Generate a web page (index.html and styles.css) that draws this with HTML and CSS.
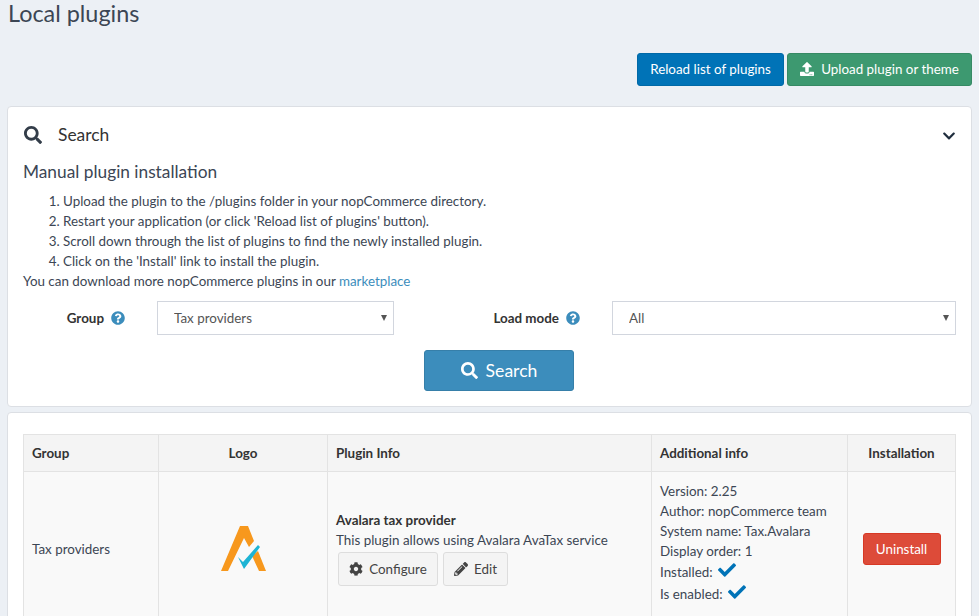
FILE: index.html
```html
<!DOCTYPE html>
<html lang="en">
<head>
    <meta charset="UTF-8">
    <meta name="viewport" content="width=device-width, initial-scale=1.0">
    <title>Local plugins</title>
    <link rel="stylesheet" href="styles.css">
</head>
<body>

    <svg class="icon-defs" width="0" height="0">
        <symbol id="i-search" viewBox="0 0 512 512"><path d="M505 442.7L405.3 343c-4.5-4.5-10.6-7-17-7H372c27.6-35.3 44-79.7 44-128C416 93.1 322.9 0 208 0S0 93.1 0 208s93.1 208 208 208c48.3 0 92.7-16.4 128-44v16.3c0 6.4 2.5 12.5 7 17l99.7 99.7c9.4 9.4 24.6 9.4 33.9 0l28.3-28.3c9.4-9.4 9.4-24.6.1-34zM208 336c-70.7 0-128-57.2-128-128 0-70.7 57.2-128 128-128 70.7 0 128 57.2 128 128 0 70.7-57.2 128-128 128z"/></symbol>
        <symbol id="i-check" viewBox="0 0 512 512"><path d="M173.898 439.404l-166.4-166.4c-9.997-9.997-9.997-26.206 0-36.204l36.203-36.204c9.997-9.998 26.207-9.998 36.204 0L192 312.69 432.095 72.596c9.997-9.997 26.207-9.997 36.204 0l36.203 36.204c9.997 9.997 9.997 26.206 0 36.204l-294.4 294.401c-9.998 9.997-26.207 9.997-36.204-.001z"/></symbol>
        <symbol id="i-help" viewBox="0 0 512 512"><path d="M504 256c0 136.997-111.043 248-248 248S8 392.997 8 256C8 119.083 119.043 8 256 8s248 111.083 248 248zM262.655 90c-54.497 0-89.255 22.957-116.549 63.758-3.536 5.286-2.353 12.415 2.715 16.258l34.699 26.31c5.205 3.947 12.621 3.008 16.665-2.122 17.864-22.658 30.113-35.797 57.303-35.797 20.429 0 45.698 13.148 45.698 32.958 0 14.976-12.363 22.667-32.534 33.976C247.128 238.528 216 254.941 216 296v4c0 6.627 5.373 12 12 12h56c6.627 0 12-5.373 12-12v-1.333c0-28.462 83.186-29.647 83.186-106.667 0-58.002-60.165-102-116.531-102zM256 338c-25.365 0-46 20.635-46 46 0 25.364 20.635 46 46 46s46-20.636 46-46c0-25.365-20.635-46-46-46z"/></symbol>
    </svg>

    <div class="page-head">
        <h1>Local plugins</h1>
        <div class="head-buttons">
            <button class="btn btn-reload" type="button">Reload list of plugins</button>
            <button class="btn btn-upload" type="button">
                <svg class="icon" viewBox="0 0 512 512"><path d="M296 384h-80c-13.3 0-24-10.7-24-24V192h-87.7c-17.8 0-26.7-21.5-14.1-34.1L242.3 5.7c7.5-7.5 19.8-7.5 27.3 0l152.2 152.2c12.6 12.6 3.7 34.1-14.1 34.1H320v168c0 13.3-10.7 24-24 24zm216-8v112c0 13.3-10.7 24-24 24H24c-13.3 0-24-10.7-24-24V376c0-13.3 10.7-24 24-24h136v8c0 30.9 25.1 56 56 56h80c30.9 0 56-25.1 56-56v-8h136c13.3 0 24 10.7 24 24zm-124 88c0-11-9-20-20-20s-20 9-20 20 9 20 20 20 20-9 20-20zm64 0c0-11-9-20-20-20s-20 9-20 20 9 20 20 20 20-9 20-20z"/></svg>
                Upload plugin or theme
            </button>
        </div>
    </div>

    <div class="card search-card">
        <div class="search-head">
            <svg class="icon search-head-icon"><use href="#i-search"/></svg>
            <span class="search-head-text">Search</span>
            <svg class="icon chevron" viewBox="0 0 448 512"><path d="M207.029 381.476L12.686 187.132c-9.373-9.373-9.373-24.569 0-33.941l22.667-22.667c9.357-9.357 24.522-9.375 33.901-.04L224 284.505l154.745-154.021c9.379-9.335 24.544-9.317 33.901.04l22.667 22.667c9.373 9.373 9.373 24.569 0 33.941L240.971 381.476c-9.373 9.372-24.569 9.372-33.942 0z"/></svg>
        </div>

        <h2>Manual plugin installation</h2>
        <ol class="steps">
            <li>Upload the plugin to the /plugins folder in your nopCommerce directory.</li>
            <li>Restart your application (or click 'Reload list of plugins' button).</li>
            <li>Scroll down through the list of plugins to find the newly installed plugin.</li>
            <li>Click on the 'Install' link to install the plugin.</li>
        </ol>
        <p class="more">You can download more nopCommerce plugins in our <a href="#">marketplace</a></p>

        <div class="filters">
            <label class="filter-label">Group <svg class="icon help"><use href="#i-help"/></svg></label>
            <div class="select-wrap">
                <select><option>Tax providers</option></select>
            </div>
            <label class="filter-label">Load mode <svg class="icon help"><use href="#i-help"/></svg></label>
            <div class="select-wrap">
                <select><option>All</option></select>
            </div>
        </div>

        <div class="search-action">
            <button class="btn btn-search" type="button">
                <svg class="icon"><use href="#i-search"/></svg>
                Search
            </button>
        </div>
    </div>

    <div class="card table-card">
        <table>
            <thead>
                <tr>
                    <th class="col-group">Group</th>
                    <th class="col-logo center">Logo</th>
                    <th class="col-info">Plugin Info</th>
                    <th class="col-extra">Additional info</th>
                    <th class="center">Installation</th>
                </tr>
            </thead>
            <tbody>
                <tr>
                    <td>Tax providers</td>
                    <td class="center">
                        <svg class="logo" viewBox="0 0 75 70">
                            <polygon fill="#f7981d" points="16,57 23,57 39,24 44,33 49,27 43,12 35,12"/>
                            <polygon fill="#f7981d" points="47,42 54,57 61,57 53,37"/>
                            <polygon fill="#1db4d4" points="33,43 38,48 53,31 55,33 39,55"/>
                        </svg>
                    </td>
                    <td class="info">
                        <div class="plugin-name">Avalara tax provider</div>
                        <div>This plugin allows using Avalara AvaTax service</div>
                        <div class="plugin-actions">
                            <button class="btn btn-plain btn-configure" type="button">
                                <svg class="icon" viewBox="0 0 512 512"><path d="M487.4 315.7l-42.6-24.6c4.3-23.2 4.3-47 0-70.2l42.6-24.6c4.9-2.8 7.1-8.6 5.5-14-11.1-35.6-30-67.8-54.7-94.6-3.8-4.1-10-5.1-14.8-2.3L380.8 110c-17.9-15.4-38.5-27.3-60.8-35.1V25.8c0-5.6-3.9-10.5-9.4-11.7-36.7-8.2-74.3-7.8-109.2 0-5.5 1.2-9.4 6.1-9.4 11.7V75c-22.2 7.9-42.8 19.8-60.8 35.1L88.7 85.5c-4.9-2.8-11-1.9-14.8 2.3-24.7 26.7-43.6 58.9-54.7 94.6-1.7 5.4.6 11.2 5.5 14L67.3 221c-4.3 23.2-4.3 47 0 70.2l-42.6 24.6c-4.9 2.8-7.1 8.6-5.5 14 11.1 35.6 30 67.8 54.7 94.6 3.8 4.1 10 5.1 14.8 2.3l42.6-24.6c17.9 15.4 38.5 27.3 60.8 35.1v49.2c0 5.6 3.9 10.5 9.4 11.7 36.7 8.2 74.3 7.8 109.2 0 5.5-1.2 9.4-6.1 9.4-11.7v-49.2c22.2-7.9 42.8-19.8 60.8-35.1l42.6 24.6c4.9 2.8 11 1.9 14.8-2.3 24.7-26.7 43.6-58.9 54.7-94.6 1.5-5.5-.7-11.3-5.6-14.1zM256 336c-44.1 0-80-35.9-80-80s35.9-80 80-80 80 35.9 80 80-35.9 80-80 80z"/></svg>
                                Configure
                            </button>
                            <button class="btn btn-plain btn-edit" type="button">
                                <svg class="icon" viewBox="0 0 512 512"><path d="M497.9 142.1l-46.1 46.1c-4.7 4.7-12.3 4.7-17 0l-111-111c-4.7-4.7-4.7-12.3 0-17l46.1-46.1c18.7-18.7 49.1-18.7 67.9 0l60.1 60.1c18.8 18.7 18.8 49.1 0 67.9zM284.2 99.8L21.6 362.4.4 483.9c-2.9 16.4 11.4 30.6 27.8 27.8l121.5-21.3 262.6-262.6c4.7-4.7 4.7-12.3 0-17l-111-111c-4.8-4.7-12.4-4.7-17.1 0zM124.1 339.9c-5.5-5.5-5.5-14.3 0-19.8l154-154c5.5-5.5 14.3-5.5 19.8 0s5.5 14.3 0 19.8l-154 154c-5.5 5.5-14.3 5.5-19.8 0zM88 424h48v36.3l-64.5 11.3-31.1-31.1L51.7 376H88v48z"/></svg>
                                Edit
                            </button>
                        </div>
                    </td>
                    <td class="extra">
                        <div>Version: 2.25</div>
                        <div>Author: nopCommerce team</div>
                        <div>System name: Tax.Avalara</div>
                        <div>Display order: 1</div>
                        <div class="flag">Installed: <svg class="icon tick"><use href="#i-check"/></svg></div>
                        <div class="flag">Is enabled: <svg class="icon tick"><use href="#i-check"/></svg></div>
                    </td>
                    <td class="center">
                        <button class="btn btn-uninstall" type="button">Uninstall</button>
                    </td>
                </tr>
            </tbody>
        </table>
    </div>

</body>
</html>
```

FILE: styles.css
```css
html {
    overflow: hidden;
}

body {
    margin: 0;
    padding: 0 7px;
    background: #ecf0f5;
    color: #333;
    font-family: "Lato", "Noto Sans", sans-serif;
    font-size: 13.4px;
    line-height: 20px;
}

.icon-defs {
    display: block;
}

.icon {
    width: 14px;
    height: 14px;
    fill: currentColor;
    flex: none;
}

.page-head {
    padding-bottom: 20px;
}

h1 {
    margin: 0;
    padding: 0 0 0 1px;
    font-size: 23.4px;
    font-weight: 400;
    line-height: 27px;
    color: #3c4654;
}

.head-buttons {
    display: flex;
    justify-content: flex-end;
    gap: 3px;
    margin-top: 26px;
}

.btn {
    display: inline-flex;
    align-items: center;
    justify-content: center;
    border-radius: 3px;
    border: 1px solid transparent;
    font-family: inherit;
    font-size: 13.4px;
    color: #fff;
    cursor: pointer;
}

.btn-reload {
    width: 147px;
    height: 33px;
    padding-bottom: 3px;
    background: #0073b7;
    border-color: #0069a7;
}

.btn-upload {
    width: 185px;
    height: 33px;
    padding-bottom: 3px;
    gap: 7px;
    background: #3d9970;
    border-color: #368a64;
}

.card {
    background: #fff;
    border: 1px solid #dcdfe4;
    border-radius: 4px;
    box-sizing: border-box;
}

.search-card {
    height: 301px;
    padding: 0 15px;
}

.search-head {
    display: flex;
    align-items: center;
    height: 56px;
}

.search-head-icon {
    width: 18px;
    height: 18px;
    color: #333d49;
    margin-left: 1px;
}

.search-head-text {
    margin-left: 16px;
    font-size: 17.4px;
    color: #333;
}

.chevron {
    margin-left: auto;
    margin-top: 2px;
    color: #1f2d3d;
}

h2 {
    margin: -1px 0 0;
    font-size: 17.3px;
    font-weight: 400;
    line-height: 20px;
    color: #3c4654;
}

.steps {
    margin: 9px 0 0;
    padding-left: 40px;
    color: #3c4654;
}

.more {
    margin: 0;
    color: #3c4654;
}

.more a {
    color: #3c8dbc;
    text-decoration: none;
}

.filters {
    display: grid;
    grid-template-columns: 102px 237px 154px 344px;
    column-gap: 32px;
    align-items: center;
    margin-top: 10px;
}

.filter-label {
    display: flex;
    align-items: center;
    justify-content: flex-end;
    gap: 7px;
    font-weight: 700;
    color: #333;
}

.help {
    color: #3c8dbc;
}

.select-wrap {
    position: relative;
}

.select-wrap::after {
    content: "";
    position: absolute;
    top: 14px;
    right: 7px;
    border-left: 3px solid transparent;
    border-right: 3px solid transparent;
    border-top: 6px solid #555;
}

select {
    display: block;
    width: 100%;
    height: 34px;
    padding: 0 16px;
    appearance: none;
    background: #fff;
    border: 1px solid #d2d6de;
    border-radius: 0;
    font-family: inherit;
    font-size: 13.4px;
    color: #555;
}

.search-action {
    display: flex;
    justify-content: center;
    margin-top: 15px;
    padding-left: 19px;
}

.btn-search {
    width: 150px;
    height: 41px;
    gap: 8px;
    background: #3c8dbc;
    border-color: #367fa9;
    font-size: 17.6px;
}

.btn-search .icon {
    width: 17px;
    height: 17px;
}

.table-card {
    margin-top: 5px;
    padding: 21px 15px 0;
}

table {
    width: 100%;
    border-collapse: collapse;
    table-layout: fixed;
}

th, td {
    border: 1px solid #e3e3e3;
    padding: 8px;
    text-align: left;
    vertical-align: middle;
    color: #3c4654;
}

th {
    background: #f4f4f4;
    font-weight: 700;
    color: #333;
    height: 37px;
    box-sizing: border-box;
}

td {
    background: #f9f9f9;
}

.center {
    text-align: center;
}

.col-group { width: 135px; }
.col-logo { width: 169px; }
.col-info { width: 324px; }
.col-extra { width: 196px; }

.logo {
    display: block;
    width: 75px;
    height: 70px;
    margin: 0 auto;
    position: relative;
    left: -1px;
}

.info {
    padding-bottom: 10px;
}

.plugin-name {
    font-weight: 700;
    color: #333;
}

.plugin-actions {
    display: flex;
    gap: 5px;
    margin-top: 2px;
    padding-left: 2px;
}

.btn-plain {
    height: 34px;
    gap: 6px;
    background: #f4f4f4;
    border-color: #ddd;
    color: #444;
}

.btn-configure { width: 100px; }
.btn-edit { width: 65px; }

.extra {
    line-height: 20px;
    padding-top: 9px;
    padding-bottom: 21px;
}

.flag {
    display: flex;
    align-items: center;
    gap: 5px;
    height: 22px;
}

.tick {
    width: 18px;
    height: 18px;
    color: #0073b7;
    margin-top: -4px;
}

.btn-uninstall {
    width: 78px;
    height: 32px;
    background: #dd4b39;
    border-color: #d73925;
}
```
